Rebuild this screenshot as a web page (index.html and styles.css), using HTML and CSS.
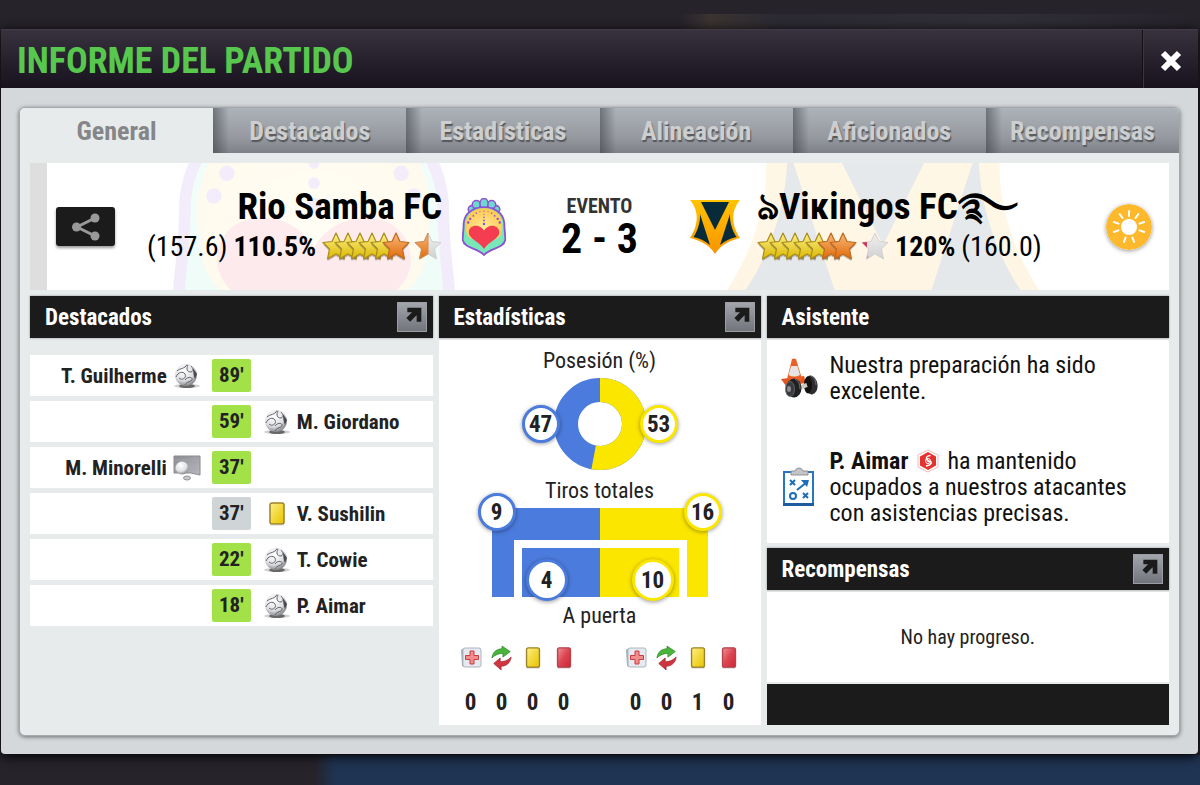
FILE: index.html
```html
<!DOCTYPE html>
<html lang="es">
<head>
    <meta charset="UTF-8">
    <meta name="viewport" content="width=device-width, initial-scale=1.0">
    <title>Informe del partido</title>
    <link rel="stylesheet" href="styles.css">
</head>
<body>

    <!-- shared icons -->
    <svg class="sprite" aria-hidden="true">
        <defs>
            <linearGradient id="gold" x1="0" y1="0" x2="0" y2="1"><stop offset="0" stop-color="#fbf08a"/><stop offset="1" stop-color="#dcb800"/></linearGradient>
            <linearGradient id="orange" x1="0" y1="0" x2="0" y2="1"><stop offset="0" stop-color="#f8b97c"/><stop offset="1" stop-color="#e06a08"/></linearGradient>
            <linearGradient id="silver" x1="0" y1="0" x2="0" y2="1"><stop offset="0" stop-color="#f1f1f1"/><stop offset="1" stop-color="#cfd0cf"/></linearGradient>
            <linearGradient id="yellow-card" x1="0" y1="0" x2="1" y2="1"><stop offset="0" stop-color="#ffef8a"/><stop offset="0.5" stop-color="#f3d83c"/><stop offset="1" stop-color="#e8c400"/></linearGradient>
            <linearGradient id="red-card" x1="0" y1="0" x2="1" y2="1"><stop offset="0" stop-color="#f0919a"/><stop offset="0.5" stop-color="#dc4450"/><stop offset="1" stop-color="#cf2433"/></linearGradient>
            <linearGradient id="vgold" x1="0" y1="0" x2="0" y2="1"><stop offset="0" stop-color="#ffc400"/><stop offset="1" stop-color="#f99300"/></linearGradient>
            <linearGradient id="net" x1="0" y1="0" x2="1" y2="1"><stop offset="0" stop-color="#8b8b92"/><stop offset="1" stop-color="#b9b9bf"/></linearGradient>
            <radialGradient id="dome" cx="0.5" cy="0.6" r="0.6"><stop offset="0" stop-color="#fff0a0"/><stop offset="1" stop-color="#ffc850"/></radialGradient>
            <radialGradient id="ballfill" cx="0.4" cy="0.3" r="0.75"><stop offset="0" stop-color="#ffffff"/><stop offset="0.6" stop-color="#dfe0e3"/><stop offset="1" stop-color="#77787c"/></radialGradient>
            <path id="star-shape" d="M14 1 L18 9.500 L27 10.500 L20.500 17 L22.500 27 L14 22 L5.500 27 L7.500 17 L1 10.500 L10 9.500Z" stroke-linejoin="round"/>
        </defs>
        <symbol id="star-gold" viewBox="0 0 28 30"><use href="#star-shape" fill="#77756c" opacity="0.5" y="2"/><use href="#star-shape" fill="url(#gold)" stroke="#a98b1c" stroke-width="1.200"/></symbol>
        <symbol id="star-orange" viewBox="0 0 28 30"><use href="#star-shape" fill="#77756c" opacity="0.5" y="2"/><use href="#star-shape" fill="url(#orange)" stroke="#c0681d" stroke-width="1.200"/></symbol>
        <symbol id="star-half" viewBox="0 0 28 30"><use href="#star-shape" fill="url(#silver)" stroke="#d0d0cc"/><path d="M14 1V22L5.500 27L7.500 17L1 10.500L10 9.500Z" fill="url(#orange)" stroke="#c98d58"/></symbol>
        <symbol id="star-empty" viewBox="0 0 28 30"><use href="#star-shape" fill="url(#silver)" stroke="#d3d0d0"/><path d="M6 10L1 10.500L6 15.500Z" fill="#c8385a"/><path d="M6.500 23L5.500 27L8 25.500" fill="#e09aa8"/></symbol>
        <symbol id="ball" viewBox="0 0 28 26">
            <ellipse cx="14" cy="23" rx="13" ry="2" fill="#000" opacity="0.18"/>
            <ellipse cx="14" cy="23" rx="8" ry="2" fill="#000" opacity="0.5"/>
            <circle cx="13" cy="12" r="11" fill="url(#ballfill)"/>
            <path d="M4 8C7 5 12 6 14 1.500M15 2C13 6 14 9 18 9C21 8 20 5 18 3M3 14C5 9 10 8 12 11C14 15 9 18 6 15M12 17C15 13 20 14 19 17C18 19 14 18 12 22" fill="none" stroke="#63656b" stroke-width="1"/>
            <path d="M20 5L24 11L22 16Q20 12 20 5Z" fill="#4a4c51"/>
        </symbol>
        <symbol id="goal-chance" viewBox="0 0 28 26">
            <path d="M1 1H27V20L18 18H1Z" fill="url(#net)" stroke="#8a8a90"/>
            <path d="M22 1V18M1 5H27M1 14H27" stroke="#a6a6ac" stroke-width="0.700"/>
            <circle cx="9" cy="13" r="6.500" fill="url(#ballfill)"/>
            <ellipse cx="14" cy="23" rx="3.500" ry="2" fill="#c9cacc" stroke="#909095"/>
        </symbol>
        <symbol id="card-yellow" viewBox="0 0 18 26"><rect x="2" y="2" width="14" height="21" rx="2" fill="url(#yellow-card)" stroke="#9b832a" stroke-width="1.500"/><path d="M2 24H16" stroke="#bbb" opacity="0.600"/></symbol>
        <symbol id="card-red" viewBox="0 0 18 26"><rect x="2" y="2" width="14" height="21" rx="2" fill="url(#red-card)" stroke="#b6424c" stroke-width="1.500"/><path d="M2 24H16" stroke="#bbb" opacity="0.600"/></symbol>
        <symbol id="injury" viewBox="0 0 22 22">
            <path d="M1 3L4 1V20L2 19Z" fill="#a5acb5"/>
            <rect x="3" y="1" width="18" height="19" rx="2" fill="#e6eaf0" stroke="#aeb5bf"/>
            <path d="M10 4H14V8.500H18.500V12.500H14V17H10V12.500H5.500V8.500H10Z" fill="#f08d8d" stroke="#cb3c42"/>
        </symbol>
        <symbol id="sub" viewBox="0 0 24 28">
            <path d="M1 14C2 6 8 4 12 4V1L21 7L13 13V9C9 9 5 10 1 14Z" fill="#49b53a" stroke="#2d8428" stroke-width="0.800"/>
            <path d="M22 13C21 20 16 23 11 23V27L3 20L10 14V18C14 18 18 17 22 13Z" fill="#cf3440" stroke="#9d2530" stroke-width="0.800"/>
        </symbol>
        <symbol id="expand" viewBox="0 0 30 30"><path d="M10 5H25V20H20V13L13 20L9 16L15 10H10Z" fill="#1b1b1b"/></symbol>
        <symbol id="crest-samba" viewBox="0 0 44 57">
            <g fill="#6fd8cf" stroke="#8c52d2" stroke-width="1.500">
                <circle cx="10" cy="11" r="3.500"/><circle cx="34" cy="11" r="3.500"/>
                <circle cx="14.500" cy="6.500" r="4"/><circle cx="29.500" cy="6.500" r="4"/><ellipse cx="22" cy="5.500" rx="4" ry="5"/>
            </g>
            <path d="M22 9C14 9 3 13 2 25C2 33 1 36 1 41C3 50 16 49 22 56C28 49 41 50 43 41C43 36 42 33 42 25C41 13 30 9 22 9Z" fill="#79e8b8" stroke="#8c52d2" stroke-width="1.800"/>
            <path d="M22 10C14 10 5 14 4 25C4 34 5 38 10 40L22 46L34 40C39 38 40 34 40 25C39 14 30 10 22 10Z" fill="url(#dome)"/>
            <path d="M22 50C17 43 7 40 7 34C7 26 18 25 22 32C26 25 37 26 37 34C37 40 27 43 22 50Z" fill="#f53d52"/>
            <g fill="#8c52d2"><circle cx="22" cy="13" r="0.600"/><circle cx="22" cy="16" r="0.600"/><circle cx="22" cy="19" r="0.800"/><circle cx="22" cy="22" r="0.900"/><circle cx="22" cy="25.500" r="1.200"/><circle cx="6.500" cy="24" r="1.200"/><circle cx="37.500" cy="24" r="1.200"/><circle cx="8.500" cy="20.500" r="1.200"/><circle cx="35.500" cy="20.500" r="1.200"/><circle cx="11.500" cy="17.500" r="0.900"/><circle cx="32.500" cy="17.500" r="0.900"/><circle cx="14.500" cy="15" r="0.800"/><circle cx="29.500" cy="15" r="0.800"/><circle cx="18" cy="13.500" r="0.600"/><circle cx="26" cy="13.500" r="0.600"/></g>
        </symbol>
        <symbol id="crest-vikingos" viewBox="0 0 50 54">
            <path d="M0 0H50C40 12 42 26 50 38C42 40 31 44 25 54C19 44 8 40 0 38C8 26 10 12 0 0Z" fill="url(#vgold)"/>
            <path d="M11 2H39L25 30ZM10 14C10.500 23 7 32 3.500 37C10 38.500 15 41 20 45ZM40 14C39.500 23 43 32 46.500 37C40 38.500 35 41 30 45Z" fill="#082b3a"/>
        </symbol>
    </svg>

    <div class="modal">
        <header class="modal-header">
            <h1>INFORME DEL PARTIDO</h1>
            <button class="close" aria-label="Cerrar">
                <svg width="22" height="22" viewBox="0 0 22 22"><path d="M3 3L19 19M19 3L3 19" stroke="#fff" stroke-width="6"/></svg>
            </button>
        </header>

        <main class="modal-body">
            <div class="report">
                <nav class="tabs">
                    <button class="tab active">General</button>
                    <button class="tab">Destacados</button>
                    <button class="tab">Estadísticas</button>
                    <button class="tab">Alineación</button>
                    <button class="tab">Aficionados</button>
                    <button class="tab">Recompensas</button>
                </nav>

                <div class="content">
                    <section class="match">
                        <svg class="watermark home-mark" viewBox="0 0 44 57"><use href="#crest-samba"/></svg>
                        <svg class="watermark away-mark" viewBox="0 0 50 54"><use href="#crest-vikingos"/></svg>

                        <div class="side home">
                            <button class="share" aria-label="Compartir">
                                <svg width="30" height="28" viewBox="0 0 30 28"><path d="M24 5L6 14L24 23" fill="none" stroke="#999" stroke-width="3"/><g fill="#999"><circle cx="24" cy="5" r="4.500"/><circle cx="5.500" cy="14" r="4.500"/><circle cx="24" cy="23" r="4.500"/></g></svg>
                            </button>
                            <div class="team">
                                <h2>Rio Samba FC</h2>
                                <div class="rating">
                                    <span>(157.6)</span>
                                    <strong>110.5%</strong>
                                    <span class="stars">
                                        <svg class="star"><use href="#star-gold"/></svg>
                                        <svg class="star"><use href="#star-gold"/></svg>
                                        <svg class="star"><use href="#star-gold"/></svg>
                                        <svg class="star"><use href="#star-gold"/></svg>
                                        <svg class="star"><use href="#star-gold"/></svg>
                                        <svg class="star"><use href="#star-orange"/></svg>
                                        <svg class="star last"><use href="#star-half"/></svg>
                                    </span>
                                </div>
                            </div>
                        </div>

                        <div class="result">
                            <svg class="crest" viewBox="0 0 44 57"><use href="#crest-samba"/></svg>
                            <div class="score">
                                <span class="event">EVENTO</span>
                                <strong>2 - 3</strong>
                            </div>
                            <svg class="crest" viewBox="0 0 50 54"><use href="#crest-vikingos"/></svg>
                        </div>

                        <div class="side away">
                            <div class="team">
                                <h2>ঌViĸingos FC࿐</h2>
                                <div class="rating">
                                    <span class="stars">
                                        <svg class="star"><use href="#star-gold"/></svg>
                                        <svg class="star"><use href="#star-gold"/></svg>
                                        <svg class="star"><use href="#star-gold"/></svg>
                                        <svg class="star"><use href="#star-gold"/></svg>
                                        <svg class="star"><use href="#star-gold"/></svg>
                                        <svg class="star"><use href="#star-orange"/></svg>
                                        <svg class="star"><use href="#star-orange"/></svg>
                                        <svg class="star last"><use href="#star-empty"/></svg>
                                    </span>
                                    <strong>120%</strong>
                                    <span>(160.0)</span>
                                </div>
                            </div>
                            <svg class="weather" viewBox="0 0 46 46">
                                <circle cx="23" cy="23" r="23" fill="#fdb82c"/>
                                <circle cx="23" cy="23" r="8" fill="#fff"/>
                                <path d="M23 7V12M32.400 10L29.500 14M38.200 18L33.500 19.600M38.200 28L33.500 26.400M28 38L26.400 33.500M18 38L19.600 33.500M7.800 28L12.500 26.400M7.800 18L12.500 19.600M13.600 10L16.500 14" stroke="#fff" stroke-width="2" stroke-linecap="round"/>
                            </svg>
                        </div>
                    </section>

                    <div class="columns">
                        <section class="column">
                            <header class="panel-header">
                                <h3>Destacados</h3>
                                <button class="expand" aria-label="Ver destacados"><svg viewBox="0 0 30 30"><use href="#expand"/></svg></button>
                            </header>
                            <ul class="events">
                                <li><span class="player left">T. Guilherme <svg class="icon"><use href="#ball"/></svg></span><span class="minute">89'</span></li>
                                <li><span class="minute">59'</span><span class="player right"><svg class="icon"><use href="#ball"/></svg> M. Giordano</span></li>
                                <li><span class="player left">M. Minorelli <svg class="icon"><use href="#goal-chance"/></svg></span><span class="minute">37'</span></li>
                                <li><span class="minute grey">37'</span><span class="player right"><svg class="icon"><use href="#card-yellow"/></svg> V. Sushilin</span></li>
                                <li><span class="minute">22'</span><span class="player right"><svg class="icon"><use href="#ball"/></svg> T. Cowie</span></li>
                                <li><span class="minute">18'</span><span class="player right"><svg class="icon"><use href="#ball"/></svg> P. Aimar</span></li>
                            </ul>
                        </section>

                        <section class="column">
                            <header class="panel-header">
                                <h3>Estadísticas</h3>
                                <button class="expand" aria-label="Ver estadísticas"><svg viewBox="0 0 30 30"><use href="#expand"/></svg></button>
                            </header>
                            <div class="panel stats">
                                <p>Posesión (%)</p>
                                <div class="possession">
                                    <svg width="92" height="92" viewBox="0 0 92 92">
                                        <circle cx="46" cy="46" r="34" fill="none" stroke="#4b7bdc" stroke-width="24"/>
                                        <circle cx="46" cy="46" r="34" fill="none" stroke="#fbe600" stroke-width="24" pathLength="100" stroke-dasharray="53 47" transform="rotate(-90 46 46)"/>
                                    </svg>
                                    <span class="bubble blue">47</span>
                                    <span class="bubble yellow">53</span>
                                </div>
                                <p>Tiros totales</p>
                                <div class="shots">
                                    <svg width="216" height="89" viewBox="0 0 216 89">
                                        <path d="M0 0H108V89H0Z" fill="#4b7bdc"/>
                                        <path d="M108 0H216V89H108Z" fill="#fbe600"/>
                                        <path d="M26 89V36H191V89" fill="none" stroke="#fff" stroke-width="8"/>
                                    </svg>
                                    <span class="bubble blue total-home">9</span>
                                    <span class="bubble yellow total-away">16</span>
                                    <span class="bubble big blue target-home">4</span>
                                    <span class="bubble big yellow target-away">10</span>
                                </div>
                                <p>A puerta</p>
                                <div class="counters">
                                    <table>
                                        <tr>
                                            <th aria-label="Lesiones"><svg><use href="#injury"/></svg></th>
                                            <th aria-label="Cambios"><svg class="tall"><use href="#sub"/></svg></th>
                                            <th aria-label="Amarillas"><svg><use href="#card-yellow"/></svg></th>
                                            <th aria-label="Rojas"><svg><use href="#card-red"/></svg></th>
                                        </tr>
                                        <tr><td>0</td><td>0</td><td>0</td><td>0</td></tr>
                                    </table>
                                    <table>
                                        <tr>
                                            <th aria-label="Lesiones"><svg><use href="#injury"/></svg></th>
                                            <th aria-label="Cambios"><svg class="tall"><use href="#sub"/></svg></th>
                                            <th aria-label="Amarillas"><svg><use href="#card-yellow"/></svg></th>
                                            <th aria-label="Rojas"><svg><use href="#card-red"/></svg></th>
                                        </tr>
                                        <tr><td>0</td><td>0</td><td>1</td><td>0</td></tr>
                                    </table>
                                </div>
                            </div>
                        </section>

                        <section class="column">
                            <header class="panel-header">
                                <h3>Asistente</h3>
                            </header>
                            <div class="panel assistant">
                                <div class="tip">
                                    <svg width="38" height="42" viewBox="0 0 38 42">
                                        <path d="M1 22L24 19L26 26L6 29Z" fill="#e2571f"/>
                                        <path d="M12 2Q14 1 16 2L22 22Q14 26 7 22Z" fill="#e9602a"/>
                                        <path d="M11 9H17.500L20 18Q14 21 8.500 18Z" fill="#e8e4e2"/>
                                        <ellipse cx="31" cy="28" rx="6.500" ry="9.500" fill="#2d2d2f" transform="rotate(-8 31 28)"/>
                                        <ellipse cx="28" cy="28" rx="4" ry="8.500" fill="#111"/>
                                        <path d="M18 31L27 28" stroke="#cfc9c2" stroke-width="4"/>
                                        <ellipse cx="14" cy="31" rx="7.500" ry="9.500" fill="#202123"/>
                                        <ellipse cx="10" cy="32" rx="4.500" ry="7.500" fill="#3a3b3f" stroke="#6b6c70" stroke-width="0.800"/>
                                        <ellipse cx="9" cy="32" rx="2" ry="3" fill="#8d8d90"/>
                                        <path d="M15 22Q20 24 20 32M31 19Q36 21 36 28" fill="none" stroke="#75767a"/>
                                    </svg>
                                    <p>Nuestra preparación ha sido excelente.</p>
                                </div>
                                <div class="tip">
                                    <svg width="38" height="42" viewBox="0 0 38 42">
                                        <rect x="4" y="6" width="29" height="33" fill="#fff" stroke="#2775c3" stroke-width="2"/>
                                        <path d="M3 37H34V40H3Z" fill="#1f5c9d"/>
                                        <path d="M11 9V5H15Q16 2 19 2T23 5H28V9Z" fill="#c3c5c8" stroke="#7b7f84" stroke-width="0.800"/>
                                        <path d="M10 14L15 19M15 14L10 19M23 27L28 32M28 27L23 32M17 24L27 16" stroke="#1e6db8" stroke-width="2"/>
                                        <path d="M21 14H29L27 21Z" fill="#1e6db8"/>
                                        <circle cx="13" cy="30" r="3" fill="none" stroke="#1e6db8" stroke-width="2"/>
                                    </svg>
                                    <p><strong>P. Aimar</strong> <svg class="skill" viewBox="0 0 22 24"><path d="M11 1L21 6V18L11 23L1 18V6Z" fill="#fff" stroke="#f6b8b6"/><path d="M11 3L19 7.500V16.500L11 21L3 16.500V7.500Z" fill="#e5312f"/><path d="M13.500 6.500Q9 7 9.500 9.500T13 12.500T12.500 16L9 17" fill="none" stroke="#fff" stroke-width="1.500"/><circle cx="11" cy="12" r="2.500" fill="none" stroke="#fff"/></svg> ha mantenido ocupados a nuestros atacantes con asistencias precisas.</p>
                                </div>
                            </div>
                            <header class="panel-header">
                                <h3>Recompensas</h3>
                                <button class="expand" aria-label="Ver recompensas"><svg viewBox="0 0 30 30"><use href="#expand"/></svg></button>
                            </header>
                            <div class="panel rewards">No hay progreso.</div>
                            <div class="panel-footer"></div>
                        </section>
                    </div>
                </div>
            </div>
        </main>
    </div>

</body>
</html>
```
FILE: styles.css
```css
* {
    box-sizing: border-box;
}

body {
    margin: 0;
    padding: 29px 2px 30px 1px;
    min-height: 100vh;
    font-family: "Roboto Condensed", "Arial Narrow", "Liberation Sans Narrow", "Liberation Sans", sans-serif;
    color: #222;
    background:
        linear-gradient(to right, transparent 315px, #1f3352 335px) bottom / 100% 30px no-repeat,
        linear-gradient(to right, transparent 680px, #3a3331 710px, #2b2a33 780px, #302e36 1000px, transparent) 0 14px / 100% 15px no-repeat,
        #26232b;
}

h1, h2, h3, p, ul {
    margin: 0;
    padding: 0;
}

button {
    font-family: inherit;
    border: none;
    padding: 0;
    cursor: pointer;
}

.sprite {
    position: absolute;
    width: 0;
    height: 0;
}

.modal {
    background: #d4d8db;
    border-radius: 4px;
    box-shadow: 0 2px 12px #000;
}

.modal-header {
    display: flex;
    justify-content: space-between;
    height: 59px;
    padding-left: 16px;
    background: linear-gradient(#38323f, #211b28 70%, #17131c);
    border-top: 1px solid #413c47;
}

.modal-header h1 {
    font-size: 36px;
    line-height: 62px;
    color: #57c84d;
}

.close {
    width: 56px;
    background: none;
    border-left: 1px solid #121016;
    box-shadow: inset 1px 0 #3b3642;
}

.close svg {
    display: block;
    margin: 3px auto 0;
}

.modal-body {
    padding: 19px 18px 18px;
}

.report {
    border: 1px solid #a5a9ad;
    border-radius: 6px;
    background: #e7ebec;
    box-shadow: 0 1px 4px rgba(0, 0, 0, 0.5);
    overflow: hidden;
}

.tabs {
    display: grid;
    grid-template-columns: repeat(6, 1fr);
}

.tab {
    height: 45px;
    font-size: 26px;
    font-weight: bold;
    color: #cdcecf;
    text-shadow: 1px 2px 1px #55585c;
    background: linear-gradient(to right, rgba(50, 53, 60, 0.5), transparent 16px), linear-gradient(#adb3ba, #96999f 65%, #7e8188);
}

.tab.active {
    color: #858687;
    text-shadow: none;
    background: #e7ebec;
}

.content {
    padding: 10px;
}

.match {
    position: relative;
    display: grid;
    grid-template-columns: 1fr 315px 1fr;
    align-items: center;
    height: 127px;
    margin-bottom: 6px;
    background: #fff;
    border-left: 17px solid #dedede;
    padding-right: 17px;
    overflow: hidden;
}

/* big faded crests behind the teams */
.watermark {
    position: absolute;
    top: -122px;
    opacity: 0.1;
}

.home-mark {
    left: 125px;
    width: 284px;
    height: 368px;
}

.away-mark {
    top: -110px;
    right: 126px;
    width: 320px;
    height: 346px;
}

.side,
.result {
    position: relative;
    display: flex;
    align-items: center;
    justify-content: space-between;
}

.home {
    margin-left: 9px;
}

.home .team {
    text-align: right;
}

.team h2 {
    font-size: 37px;
    line-height: 40px;
    color: #000;
    white-space: nowrap;
}

.rating {
    display: flex;
    align-items: center;
    gap: 6px;
    font-size: 28px;
    line-height: 40px;
    color: #000;
}

.stars {
    display: flex;
}

.star {
    width: 28px;
    height: 30px;
    margin-right: -16px;
}

.star.last {
    margin-left: 20px;
    margin-right: 0;
}

.share {
    display: flex;
    align-items: center;
    justify-content: center;
    width: 59px;
    height: 39px;
    border-radius: 3px;
    background: #1b1b1b;
    box-shadow: 0 2px 3px rgba(0, 0, 0, 0.4);
}

.result {
    padding: 0 17px;
}

.crest {
    width: 50px;
    height: 58px;
}

.score {
    display: flex;
    flex-direction: column;
    align-items: center;
}

.event {
    font-size: 20px;
    font-weight: bold;
    line-height: 24px;
    color: #333;
}

.score strong {
    font-size: 42px;
    line-height: 42px;
    color: #000;
}

.weather {
    width: 46px;
    height: 46px;
    border-radius: 50%;
    box-shadow: 0 1px 4px rgba(0, 0, 0, 0.4);
}

.columns {
    display: grid;
    grid-template-columns: 5fr 4fr 5fr;
    gap: 6px;
}

.column {
    display: flex;
    flex-direction: column;
}

.panel-header {
    display: flex;
    align-items: center;
    justify-content: space-between;
    height: 42px;
    padding: 0 6px 0 15px;
    background: #1b1b1b;
    box-shadow: 0 0 2px #888;
}

.panel-header h3 {
    font-size: 23px;
    color: #fff;
}

.expand {
    width: 30px;
    height: 30px;
    border: 1px solid #9b9da3;
    background: linear-gradient(#a3a5ac, #72747b);
}

.expand svg {
    display: block;
    width: 28px;
    height: 28px;
}

.panel {
    margin-top: 2px;
    background: #fff;
}

.events {
    display: grid;
    gap: 5px;
    margin-top: 17px;
    list-style: none;
}

.events li {
    display: grid;
    grid-template-columns: 9fr 39px 9fr;
    align-items: center;
    height: 41px;
    background: #fff;
    font-size: 21px;
    font-weight: bold;
}

.minute {
    grid-column: 2;
    line-height: 33px;
    border-radius: 2px;
    text-align: center;
    background: #a3e148;
}

.minute.grey {
    background: #cfd4d7;
}

.player {
    display: flex;
    align-items: center;
    gap: 6px;
}

.player.left {
    justify-content: flex-end;
    padding-right: 11px;
}

.player.right {
    padding-left: 12px;
}

.icon {
    width: 28px;
    height: 26px;
}

.stats {
    display: flex;
    flex-direction: column;
    align-items: center;
    padding: 6px 0 8px;
}

.stats p {
    font-size: 22px;
    line-height: 30px;
}

.possession,
.shots {
    position: relative;
    margin: 2px 0 6px;
}

.shots {
    margin-bottom: 4px;
}

.possession svg,
.shots svg {
    display: block;
}

.bubble {
    position: absolute;
    width: 38px;
    height: 38px;
    border: 3px solid #4b7bdc;
    border-radius: 50%;
    background: #fff;
    box-shadow: 0 1px 4px rgba(0, 0, 0, 0.4);
    font-size: 23px;
    font-weight: bold;
    line-height: 33px;
    text-align: center;
}

.bubble.yellow {
    border-color: #fbe600;
}

.bubble.big {
    width: 42px;
    height: 42px;
    line-height: 37px;
}

.possession .bubble {
    top: 27px;
}

.possession .blue {
    left: -32px;
}

.possession .yellow {
    right: -32px;
}

.total-home {
    left: -14px;
    top: -15px;
}

.total-away {
    right: -14px;
    top: -15px;
}

.target-home {
    left: 34px;
    bottom: -4px;
}

.target-away {
    right: 34px;
    bottom: -4px;
}

.counters {
    display: flex;
    gap: 41px;
    margin-top: 10px;
}

.counters table {
    border-collapse: collapse;
}

.counters th,
.counters td {
    width: 31px;
    padding: 0;
    text-align: center;
}

.counters th {
    height: 34px;
}

.counters td {
    padding-top: 14px;
    font-size: 23px;
    font-weight: bold;
    line-height: 28px;
}

.counters svg {
    display: block;
    width: 22px;
    height: 24px;
    margin: auto;
}

.counters svg.tall {
    height: 28px;
}

.assistant {
    flex: 1;
    padding: 12px 30px 16px 13px;
    margin-bottom: 5px;
}

.tip {
    display: flex;
    align-items: center;
    gap: 12px;
    font-size: 24px;
    line-height: 26px;
    color: #111;
}

.tip + .tip {
    margin-top: 44px;
}

.tip > svg {
    flex-shrink: 0;
}

.skill {
    width: 22px;
    height: 24px;
    margin: 0 3px;
    vertical-align: -4px;
}

.rewards {
    padding: 31px 0;
    font-size: 20px;
    line-height: 28px;
    text-align: center;
}

.panel-footer {
    height: 41px;
    margin-top: 2px;
    background: #1b1b1b;
}
```
